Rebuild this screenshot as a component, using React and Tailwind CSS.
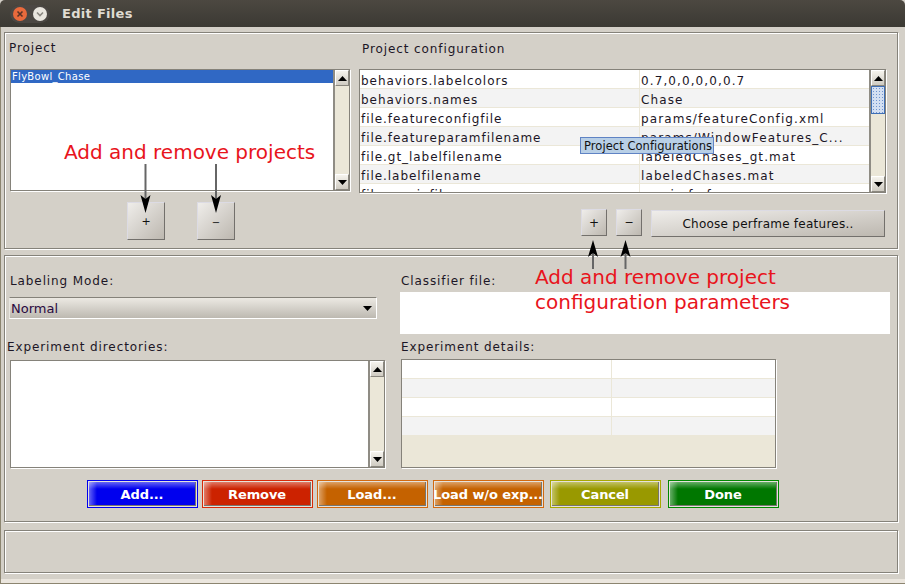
import React from "react";

const font = "font-['DejaVu_Sans',sans-serif]";
const panel = "border border-[#85827a] shadow-[1px_1px_0_#fff,inset_1px_1px_0_#fff]";
const field = "border border-[#85827a] shadow-[1px_1px_0_#fff]";

function ScrollBtn({ up }) {
  return (
    <div className="h-[16px] shrink-0 flex items-center justify-center bg-gradient-to-b from-[#f6f4ee] to-[#cfcbc2] border-t border-l border-white border-r border-b border-r-[#8a877f] border-b-[#8a877f]">
      <svg width="9" height="5" viewBox="0 0 9 5">
        <path d={up ? "M4.5 0 9 5H0Z" : "M0 0H9L4.5 5Z"} fill="#000" />
      </svg>
    </div>
  );
}

function ScrollBar({ thumb }) {
  return (
    <div className="w-[16px] shrink-0 flex flex-col bg-[#ebe7d8] border-l-2 border-[#8f8c84]">
      <ScrollBtn up />
      {thumb && (
        <div className="h-[28px] shrink-0 border border-[#3f6fb5] bg-[#d3dff2] bg-[radial-gradient(#6f94d0_0.8px,transparent_0.8px)] bg-[length:3px_3px]" />
      )}
      <div className="flex-1" />
      <ScrollBtn />
    </div>
  );
}

const configRows = [
  ["behaviors.labelcolors", "0.7,0,0,0,0,0.7"],
  ["behaviors.names", "Chase"],
  ["file.featureconfigfile", "params/featureConfig.xml"],
  ["file.featureparamfilename", "params/WindowFeatures_C..."],
  ["file.gt_labelfilename", "labeledChases_gt.mat"],
  ["file.labelfilename", "labeledChases.mat"],
  ["file.moviefilename", "movie.fmf"],
];

function Row({ a, b, i, w1, w2 }) {
  return (
    <div className={`flex shrink-0 h-[18px] mb-px ${i % 2 ? "bg-[#f3f3f3]" : "bg-white"}`}>
      <div className="h-full border-r border-[#ebe7d8] overflow-hidden whitespace-nowrap pl-[1px] pt-[2px] leading-[19px]" style={{ width: w1 }}>{a}</div>
      <div className="h-full overflow-hidden whitespace-nowrap pl-[1px] pt-[2px] leading-[19px] tracking-[1.1px]" style={{ width: w2 }}>{b}</div>
    </div>
  );
}

function GrayBtn({ className, children }) {
  return (
    <div className={`flex items-center justify-center bg-gradient-to-br from-[#efedea] to-[#bdb8b0] border border-t-[#dcdbe4] border-l-[#dcdbe4] border-r-[#73706c] border-b-[#73706c] text-[#111] ${className}`}>
      {children}
    </div>
  );
}

const colorBtns = [
  ["Add...", "ml-0", "border-[#0000ee]", "bg-[#0000ee]"],
  ["Remove", "ml-[4px]", "border-[#d82a08]", "bg-[#cc2200]"],
  ["Load...", "ml-[4px]", "border-[#d2690f]", "bg-[#c56200]"],
  ["Load w/o exp...", "ml-[5px]", "border-[#d2690f]", "bg-[#c56200]"],
  ["Cancel", "ml-[6px]", "border-[#a8a800]", "bg-[#999900]"],
  ["Done", "ml-[7px]", "border-[#008800]", "bg-[#007700]"],
];

function ColorBtn({ label, ml, border, bg }) {
  return (
    <div className={`w-[111px] h-[28px] border ${border} ${ml} p-px bg-[#e6e3dc]`}>
      <div className={`w-full h-full ${bg} flex items-center justify-center pt-[2px] text-white font-bold text-[13px] tracking-[-0.1px] whitespace-nowrap border-b border-r border-b-[#77756f] border-r-[#77756f] bg-[linear-gradient(to_bottom,rgba(255,255,255,0.4),rgba(255,255,255,0)_7px),linear-gradient(to_right,rgba(255,255,255,0.4),rgba(255,255,255,0)_8px)]`}>
        {label}
      </div>
    </div>
  );
}

function Label({ className, children }) {
  return <div className={`text-[12px] tracking-[0.9px] text-[#1c1626] leading-[16px] whitespace-nowrap ${className}`}>{children}</div>;
}

function Arrows() {
  const arrow = (x, y1, y2, tip, base) => (
    <g key={x}>
      <line x1={x} y1={y1} x2={x} y2={y2} stroke="#666" strokeWidth="2" />
      <path d={`M${x} ${tip} L${x - 5} ${base - 4 * Math.sign(tip - base)} L${x} ${base} L${x + 5} ${base - 4 * Math.sign(tip - base)}Z`} fill="#000" />
    </g>
  );
  return (
    <svg className="absolute left-0 top-0 pointer-events-none" width="905" height="584">
      {arrow(145.5, 164, 205, 213, 199)}
      {arrow(216, 164, 205, 213, 199)}
      {arrow(593, 248, 269, 240, 253)}
      {arrow(625.5, 248, 269, 240, 253)}
    </svg>
  );
}

export default function App() {
  return (
    <div className={`relative w-[905px] h-[584px] overflow-hidden bg-[#d4d0c8] flex flex-col ${font} text-[13px]`}>
      <div className="h-[27px] shrink-0 rounded-t-[5px] bg-gradient-to-b from-[#4c4841] to-[#3b3933] flex items-center">
        <svg className="ml-[10px]" width="41" height="20" viewBox="0 0 41 20">
          <rect x="0" y="1" width="40" height="18" rx="9" fill="#2d2b27" />
          <rect x="0" y="1" width="40" height="18" rx="9" fill="#77746d" opacity="0.4" />
          <circle cx="10" cy="10" r="7" fill="#ea6a3c" />
          <path d="M7.5 7.5 12.5 12.5M12.5 7.5 7.5 12.5" stroke="#5b3326" strokeWidth="1.6" />
          <circle cx="30" cy="10" r="7" fill="#e9e6df" />
          <path d="M27 8.5 30 11.5 33 8.5" stroke="#8a8780" strokeWidth="1.6" fill="none" />
        </svg>
        <div className="ml-[11px] pt-[1px] font-bold text-[13px] tracking-[0.3px] text-[#dfdbd2]">Edit Files</div>
      </div>

      <div className="flex-1 flex flex-col pl-[4px] pt-[5px] border-l border-[#8c8570]">
        <div className={`${panel} -ml-px w-[894px] h-[217px] shrink-0 flex`}>
          <div className="w-[354px] shrink-0 pl-[5px]">
            <Label className="h-[28px] leading-[30px] mb-[8px] -ml-px">Project</Label>
            <div className={`${field} h-[122px] w-[340px] flex bg-white`}>
              <div className="flex-1 min-w-0">
                <div className="h-[13px] bg-[#3068c4] text-white text-[10px] tracking-[0.3px] leading-[13px] pl-[1px]">FlyBowl_Chase</div>
              </div>
              <ScrollBar />
            </div>
            <div className="flex ml-[117px] mt-[11px] gap-[32px]">
              <GrayBtn className="w-[38px] h-[38px] pt-[2px] text-[11px]">+</GrayBtn>
              <GrayBtn className="w-[38px] h-[38px] pt-[2px] text-[10px]">−</GrayBtn>
            </div>
          </div>
          <div className="w-[527px] shrink-0">
            <Label className="h-[32px] leading-[33px] mb-[4px] pl-[3px]">Project configuration</Label>
            <div className={`${field} h-[124px] flex bg-[#ebe7d8] overflow-hidden`}>
              <div className="flex-1 min-w-0 flex flex-col overflow-hidden text-[12px] tracking-[0.95px] text-[#1c1626]">
                {configRows.map((r, i) => (
                  <Row key={r[0]} a={r[0]} b={r[1]} i={i} w1={280} w2={204} />
                ))}
              </div>
              <ScrollBar thumb />
            </div>
            <div className="flex justify-end items-start mt-[16px] pr-[1px]">
              <GrayBtn className="w-[26px] h-[27px] mr-[9px] pt-[1px] text-[12px]">+</GrayBtn>
              <GrayBtn className="w-[26px] h-[27px] mr-[9px] pt-[1px] text-[11px]">−</GrayBtn>
              <GrayBtn className="w-[234px] h-[27px] mt-px tracking-[0.25px] text-[12px]">Choose perframe features..</GrayBtn>
            </div>
          </div>
        </div>

        <div className={`${panel} -ml-px w-[894px] h-[267px] mt-[6px] shrink-0 flex flex-col`}>
          <div className="flex h-[212px] shrink-0">
            <div className="w-[395px] shrink-0">
              <Label className="mt-[17px] pl-[5px]">Labeling Mode:</Label>
              <div className="mt-[8px] ml-[4px] w-[368px] h-[22px] border border-white border-t-[#85827a] border-l-[#e8e6e0] bg-gradient-to-b from-[#ece9e3] to-[#bdb9b1] flex items-center justify-between pl-[1px] pr-[4px] pt-[1px] text-[13px] text-[#2a0a40]">
                <span>Normal</span>
                <svg width="9" height="5" viewBox="0 0 9 5"><path d="M0 0H9L4.5 5Z" fill="#000" /></svg>
              </div>
              <Label className="mt-[20px] pl-[2px]">Experiment directories:</Label>
              <div className={`${field} mt-[5px] ml-[5px] w-[375px] h-[108px] flex bg-white`}>
                <div className="flex-1" />
                <ScrollBar />
              </div>
            </div>
            <div className="flex-1">
              <Label className="mt-[17px] pl-[1px]">Classifier file:</Label>
              <div className="mt-[3px] w-[490px] h-[42px] bg-white" />
              <Label className="mt-[5px] pl-[1px]">Experiment details:</Label>
              <div className={`${field} mt-[4px] ml-[1px] w-[375px] h-[109px] bg-[#ebe7d8] flex flex-col`}>
                {[0, 1, 2, 3].map((i) => (
                  <Row key={i} a="" b="" i={i} w1={210} w2={156} />
                ))}
              </div>
            </div>
          </div>
          <div className="flex pl-[82px] mt-[12px]">
            {colorBtns.map((b) => (
              <ColorBtn key={b[0]} label={b[0]} ml={b[1]} border={b[2]} bg={b[3]} />
            ))}
          </div>
        </div>

        <div className={`${panel} -ml-px w-[894px] h-[43px] mt-[8px] shrink-0`} />
        <div className="flex-1" />
        <div className="h-[5px] -ml-[4px] bg-[#ebe6de] border-b border-[#8c8570]" />
      </div>

      <Arrows />
      <div className="absolute left-[64px] top-[140px] text-[20px] leading-[24px] text-[#e8141c] whitespace-nowrap">Add and remove projects</div>
      <div className="absolute left-[535px] top-[265px] text-[20px] leading-[25px] text-[#e8141c] whitespace-nowrap">
        Add and remove project<br />configuration parameters
      </div>
      <div className="absolute left-[580px] top-[137px] w-[134px] h-[17px] border border-[#5f83c4] bg-[#b8cfe6] text-[11.5px] tracking-[0.05px] leading-[16px] pl-[3px] text-[#111] whitespace-nowrap">Project Configurations</div>
    </div>
  );
}
